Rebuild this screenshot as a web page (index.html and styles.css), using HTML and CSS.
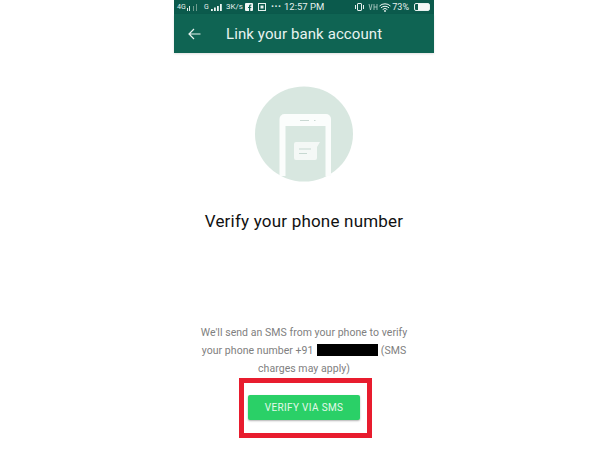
FILE: index.html
```html
<!DOCTYPE html>
<html lang="en">
<head>
<meta charset="utf-8">
<title>Link your bank account</title>
<link rel="stylesheet" href="styles.css">
</head>
<body>
<main class="phone">
  <div class="status">
    <div class="status-left">
      <span class="s-tiny">4G</span>
      <svg class="sig-a" width="11" height="9" viewBox="0 0 11 9"><path d="M0 8V5h1v3zM2 8V3h1v5z" fill="#dfeee9"/><path d="M6 8V3h1v5zM9 8V1h1v7z" fill="#6f9c8f"/></svg>
      <span class="s-tiny s-g">G</span>
      <svg class="sig-b" width="13" height="9" viewBox="0 0 13 9"><path d="M1 8V6h1.800v2zM4 8V4.500h1.800V8zM7 8V3h1.800v5zM10 8V1h1.800v7z" fill="#eef6f3"/></svg>
      <span class="s-text s-speed">3K/s</span>
      <svg class="ico s-fb" width="8" height="8" viewBox="0 0 8 8"><rect width="8" height="8" rx="1" fill="#f3f8f6"/><path d="M5.300 8V5h1V3.900h-1V3.200c0-.4.2-.6.600-.6h.5v-1H5.600C4.600 1.600 4 2.200 4 3.100v.8H3V5h1v3z" fill="#0a5f50"/></svg>
      <svg class="ico s-box" width="8" height="8" viewBox="0 0 8 8"><rect x=".5" y=".5" width="7" height="7" fill="none" stroke="#e6f1ee"/><rect x="2.500" y="2.500" width="3" height="3" fill="#e6f1ee"/></svg>
      <span class="s-dots">···</span>
    </div>
    <span class="s-time">12:57 PM</span>
    <div class="status-right">
      <svg class="ico" width="9" height="8" viewBox="0 0 9 8"><rect x="2.500" y=".5" width="4" height="7" rx=".5" fill="none" stroke="#e6f1ee"/><path d="M.5 2v4M8.500 2v4" stroke="#e6f1ee"/></svg>
      <svg class="ico s-net" width="10" height="8" viewBox="0 0 10 8"><path d="M1 1l1.500 6L4 1M6 1v6M9 1v6M6 4h3" fill="none" stroke="#b9d2cb" stroke-width=".8"/></svg>
      <svg class="ico s-wifi" width="12" height="9" viewBox="0 0 12 9"><path d="M.5 3a8 8 0 0 1 11 0M2 4.800a6 6 0 0 1 8 0M3.700 6.500a3.300 3.300 0 0 1 4.600 0" fill="none" stroke="#eef6f3"/><circle cx="6" cy="8" r=".9" fill="#eef6f3"/></svg>
      <span class="s-text s-pct">73%</span>
      <span class="battery"><span class="battery-fill"></span></span>
    </div>
  </div>
  <header class="toolbar">
    <svg class="back" width="13" height="12" viewBox="0 0 13 12"><path d="M12.500 6H1.200M6 1L1 6l5 5" fill="none" stroke="#e8f3f0" stroke-width="1.200"/></svg>
    <h1 class="toolbar-title">Link your bank account</h1>
  </header>
  <section class="content">
    <svg class="hero" width="98" height="96" viewBox="0 0 98 96">
      <ellipse cx="49" cy="48" rx="49" ry="47.500" fill="#d8e7e0"/>
      <path d="M24.500 90V33a5 5 0 0 1 5-5h41.500a5 5 0 0 1 5 5v57z" fill="#fbfdfc"/>
      <rect x="30.500" y="40" width="40" height="50" fill="#d8e7e0"/>
      <rect x="45" y="34" width="9" height="1" fill="#c9d8d2"/>
      <rect x="59" y="34" width="1.500" height="1" fill="#c9d8d2"/>
      <path d="M39 58a2 2 0 0 1 2-2h24l-3 5v11a2 2 0 0 1-2 2H41a2 2 0 0 1-2-2z" fill="#f4f8f6"/>
      <path d="M44 63h12M44 67.500h8" stroke="#c6d8d1" stroke-width="1"/>
    </svg>
    <h2 class="heading">Verify your phone number</h2>
    <p class="note">We'll send an SMS from your phone to verify your phone number +91 <span class="redact"></span> (SMS charges may apply)</p>
    <button class="verify" type="button">VERIFY VIA SMS</button>
  </section>
  <div class="highlight"></div>
</main>
</body>
</html>
```

FILE: styles.css
```css
* { box-sizing: border-box; }
html, body { margin: 0; height: 100%; background: #fff; }
body { overflow: hidden; font-family: Roboto, "Noto Sans", sans-serif; }
.phone {
  position: relative;
  width: 260px;
  height: 450px;
  margin-left: 174px;
  display: flex;
  flex-direction: column;
}
.status {
  height: 14px;
  background: #0b5a4c;
  color: #e6f1ee;
  display: flex;
  align-items: center;
  padding: 0 4px 0 3px;
  font-size: 8px;
  line-height: 1;
}
.status-left, .status-right { display: flex; align-items: center; }
.status-left { width: 107px; }
.status-right { margin-left: auto; }
.s-tiny { font-size: 7px; width: 10px; }
.sig-a { margin-right: 6px; }
.s-g { width: 6px; }
.sig-b { margin-right: 3px; }
.s-speed { width: 17px; font-size: 8px; }
.s-fb { margin-left: 2px; }
.s-box { margin-left: 5px; }
.s-dots { font-size: 10px; font-weight: 700; margin-left: 5px; letter-spacing: .5px; }
.s-time { font-size: 9.500px; }
.s-net { margin-left: 4px; }
.s-wifi { margin-left: 1px; }
.s-pct { margin-left: 1px; font-size: 9px; }
.ico { display: block; }
.battery {
  margin-left: 5px;
  width: 16px;
  height: 8px;
  border: 1px solid #e6f1ee;
  border-radius: 2px;
  padding: 0 0 0 3px;
  display: flex;
}
.battery-fill { flex: 1; background: #f3f8f6; }
.toolbar {
  height: 39px;
  background: #0f6453;
  display: flex;
  align-items: center;
  padding: 0 0 0 14px;
  box-shadow: 0 1px 2px rgba(0, 0, 0, .12);
}
.back { flex: none; }
.toolbar-title {
  margin: 0 0 0 25px;
  font-size: 15px;
  font-weight: 400;
  letter-spacing: .1px;
  color: #e8f3f0;
  white-space: nowrap;
}
.content {
  flex: 1;
  display: flex;
  flex-direction: column;
  align-items: center;
  padding-top: 33px;
}
.hero { display: block; }
.heading {
  margin: 29px 0 0;
  font-size: 17px;
  font-weight: 400;
  letter-spacing: .2px;
  line-height: 20px;
  color: #111;
  white-space: nowrap;
}
.note {
  margin: 93px 0 0;
  width: 218px;
  font-size: 10.500px;
  letter-spacing: .05px;
  line-height: 18px;
  text-align: center;
  color: #808080;
}
.redact {
  display: inline-block;
  width: 61px;
  height: 12px;
  margin-left: 1px;
  background: #000;
  vertical-align: -2px;
}
.verify {
  margin-top: 17px;
  width: 112px;
  height: 25px;
  border: 0;
  border-radius: 2px;
  background: #2ad067;
  color: #e3f8ea;
  font: 400 10px/1 Roboto, "Noto Sans", sans-serif;
  letter-spacing: .35px;
  box-shadow: 0 1px 2px rgba(0, 0, 0, .3);
}
.highlight {
  position: absolute;
  left: 65px;
  top: 378px;
  width: 133px;
  height: 60px;
  border: 5px solid #e81c2e;
}
```
